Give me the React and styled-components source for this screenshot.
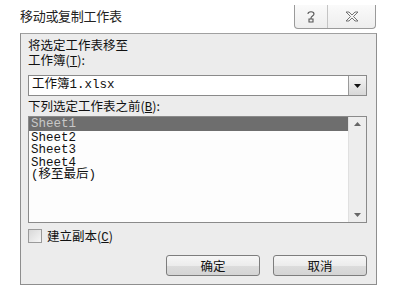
import styled, { createGlobalStyle } from 'styled-components'

const GlobalStyle = createGlobalStyle`
  body {
    margin: 0;
    background: #ffffff;
    font-family: "Noto Sans CJK SC", "Liberation Sans", sans-serif;
  }
`

const Window = styled.div`
  width: 401px;
  height: 304px;
  padding-left: 20px;
  box-sizing: border-box;
  background: #fff;
`
const TitleBar = styled.div`
  height: 33px;
  display: flex;
  align-items: flex-start;
  justify-content: space-between;
  width: 357px;
`
const Title = styled.div`
  margin-top: 8px;
  font-size: 13px;
  line-height: 15px;
  color: #222;
  letter-spacing: -0.3px;
`
const Caption = styled.div`
  display: flex;
  margin-top: 5px;
  margin-right: 1px;
  height: 23px;
  border: 1px solid #9a9a9a;
  border-top: none;
  border-radius: 0 0 4px 4px;
  background: linear-gradient(#fafafa, #eeeeee);
`
const CapBtn = styled.div`
  width: ${(p) => p.w}px;
  display: flex;
  align-items: center;
  justify-content: center;
  border-left: ${(p) => (p.first ? 'none' : '1px solid #c4c4c4')};
`
const Panel = styled.div`
  width: 357px;
  height: 252px;
  box-sizing: border-box;
  border: 1px solid #8e8e8e;
  border-top-color: #a0a0a0;
  background: #ececec;
  padding: 4px 9px 0 7px;
  display: flex;
  flex-direction: column;
`
const Label = styled.div`
  font-size: 12.5px;
  line-height: 14px;
  height: 14px;
  color: #111;
  margin-top: ${(p) => p.mt || 0}px;
  font-family: "Noto Sans CJK SC", sans-serif;
  white-space: nowrap;
`
const Under = styled.span`
  text-decoration: underline;
  font-family: "Liberation Mono", monospace;
`
const Combo = styled.div`
  margin-top: 8px;
  height: 21px;
  box-sizing: border-box;
  border: 1px solid #8a8a8a;
  background: #fff;
  display: flex;
`
const ComboText = styled.div`
  flex: 1;
  padding-left: 3px;
  font-size: 12.5px;
  line-height: 19px;
  color: #111;
  font-family: "Liberation Mono", "Noto Sans CJK SC", monospace;
`
const DropBtn = styled.div`
  width: 17px;
  border-left: 1px solid #9a9a9a;
  background: linear-gradient(#f4f4f4, #d8d8d8);
  display: flex;
  align-items: center;
  justify-content: center;
`
const List = styled.div`
  margin-top: 3px;
  height: 107px;
  box-sizing: border-box;
  border: 1px solid #8a8a8a;
  background: #fdfdfd;
  display: flex;
`
const Items = styled.div`
  flex: 1;
  display: flex;
  flex-direction: column;
`
const Item = styled.div`
  height: ${(p) => (p.sel ? 14 : 12.3)}px;
  line-height: ${(p) => (p.sel ? 14 : 12.3)}px;
  padding-left: 2px;
  font-size: 12.5px;
  font-family: "Liberation Mono", "Noto Sans CJK SC", monospace;
  color: ${(p) => (p.sel ? '#c8c8c8' : '#111')};
  background: ${(p) => (p.sel ? '#6e6e6e' : 'transparent')};
  margin-bottom: ${(p) => (p.sel ? 1 : 0)}px;
  white-space: nowrap;
`
const Scroll = styled.div`
  width: 17px;
  background: #ededed;
  border-left: 1px solid #e0e0e0;
  display: flex;
  flex-direction: column;
  justify-content: space-between;
  align-items: center;
  padding: 5px 0;
`
const CheckRow = styled.div`
  margin-top: 6px;
  display: flex;
  align-items: center;
  gap: 5px;
`
const Check = styled.div`
  width: 12px;
  height: 12px;
  border: 1px solid #9a9a9a;
  background: linear-gradient(135deg, #d8d8d8, #f6f6f6);
`
const Buttons = styled.div`
  margin-top: 12px;
  display: flex;
  justify-content: flex-end;
  gap: 13px;
`
const Button = styled.div`
  width: 94px;
  height: 21px;
  box-sizing: border-box;
  border: 1px solid #7d7d7d;
  border-radius: 3px;
  background: linear-gradient(#f6f6f6 0%, #ececec 50%, #dcdcdc 51%, #d4d4d4 100%);
  font-size: 12.5px;
  line-height: 19px;
  text-align: center;
  color: #111;
`

const Arrow = ({ up, color = '#111' }) => (
  <svg width="7" height="4" viewBox="0 0 7 4">
    <path d={up ? 'M0 4 L3.5 0 L7 4 Z' : 'M0 0 L7 0 L3.5 4 Z'} fill={color} />
  </svg>
)

function App() {
  return (
    <Window>
      <GlobalStyle />
      <TitleBar>
        <Title>移动或复制工作表</Title>
        <Caption>
          <CapBtn w={32} first>
            <svg width="10" height="13" viewBox="0 0 10 13">
              <path
                d="M2 4 C2 1 8 1 8 4 C8 6 5 6 5 8 L5 9 M3 9 L7 9 L7 12 L3 12 Z"
                fill="none"
                stroke="#555"
                strokeWidth="1.1"
              />
            </svg>
          </CapBtn>
          <CapBtn w={47}>
            <svg width="14" height="11" viewBox="0 0 14 11">
              <path
                d="M1 1 L4 1 L7 4 L10 1 L13 1 L8.5 5.5 L13 10 L10 10 L7 7 L4 10 L1 10 L5.5 5.5 Z"
                fill="none"
                stroke="#666"
                strokeWidth="0.9"
              />
            </svg>
          </CapBtn>
        </Caption>
      </TitleBar>
      <Panel>
        <Label>将选定工作表移至</Label>
        <Label mt={1}>
          工作簿(<Under>T</Under>):
        </Label>
        <Combo>
          <ComboText>工作簿1.xlsx</ComboText>
          <DropBtn>
            <Arrow />
          </DropBtn>
        </Combo>
        <Label mt={3}>
          下列选定工作表之前(<Under>B</Under>):
        </Label>
        <List>
          <Items>
            <Item sel>Sheet1</Item>
            <Item>Sheet2</Item>
            <Item>Sheet3</Item>
            <Item>Sheet4</Item>
            <Item>(移至最后)</Item>
          </Items>
          <Scroll>
            <Arrow up color="#666" />
            <Arrow color="#666" />
          </Scroll>
        </List>
        <CheckRow>
          <Check />
          <Label>
            建立副本(<Under>C</Under>)
          </Label>
        </CheckRow>
        <Buttons>
          <Button>确定</Button>
          <Button>取消</Button>
        </Buttons>
      </Panel>
    </Window>
  )
}

export default App
